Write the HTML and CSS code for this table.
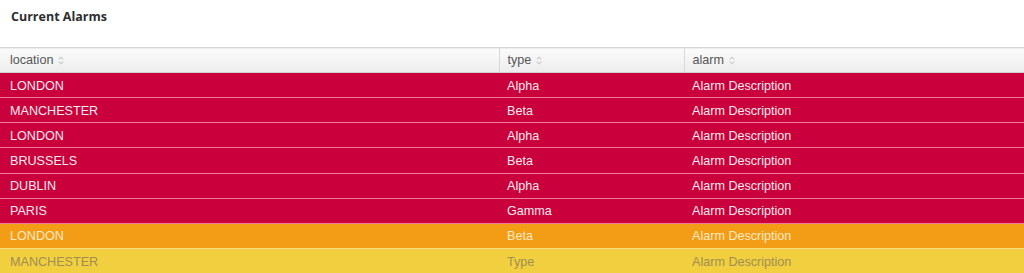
FILE: index.html
```html
<!DOCTYPE html>
<html>
<head>
<meta charset="utf-8">
<link rel="stylesheet" href="styles.css">
</head>
<body>
<div class="panel">
  <h2 class="title">Current Alarms</h2>
  <table class="alarms">
    <colgroup>
      <col class="c-loc">
      <col class="c-type">
      <col class="c-alarm">
    </colgroup>
    <thead>
      <tr>
        <th>location <span class="sort"><svg width="6" height="9" viewBox="0 0 6 9"><path d="M0.8 3.4 L3 1.2 L5.2 3.4 M0.8 5.6 L3 7.8 L5.2 5.6" fill="none" stroke="#c8c8c8" stroke-width="1.1"/></svg></span></th>
        <th class="div">type <span class="sort"><svg width="6" height="9" viewBox="0 0 6 9"><path d="M0.8 3.4 L3 1.2 L5.2 3.4 M0.8 5.6 L3 7.8 L5.2 5.6" fill="none" stroke="#c8c8c8" stroke-width="1.1"/></svg></span></th>
        <th class="div">alarm <span class="sort"><svg width="6" height="9" viewBox="0 0 6 9"><path d="M0.8 3.4 L3 1.2 L5.2 3.4 M0.8 5.6 L3 7.8 L5.2 5.6" fill="none" stroke="#c8c8c8" stroke-width="1.1"/></svg></span></th>
      </tr>
    </thead>
    <tbody>
      <tr class="crit"><td>LONDON</td><td>Alpha</td><td>Alarm Description</td></tr>
      <tr class="crit"><td>MANCHESTER</td><td>Beta</td><td>Alarm Description</td></tr>
      <tr class="crit"><td>LONDON</td><td>Alpha</td><td>Alarm Description</td></tr>
      <tr class="crit"><td>BRUSSELS</td><td>Beta</td><td>Alarm Description</td></tr>
      <tr class="crit"><td>DUBLIN</td><td>Alpha</td><td>Alarm Description</td></tr>
      <tr class="crit"><td>PARIS</td><td>Gamma</td><td>Alarm Description</td></tr>
      <tr class="major"><td>LONDON</td><td>Beta</td><td>Alarm Description</td></tr>
      <tr class="minor"><td>MANCHESTER</td><td>Type</td><td>Alarm Description</td></tr>
    </tbody>
  </table>
</div>
</body>
</html>
```

FILE: styles.css
```css
html, body {
  margin: 0;
  padding: 0;
  background: #ffffff;
}
body {
  font-family: "Liberation Sans", Arial, sans-serif;
  font-size: 12.6px;
}
.panel {
  width: 1024px;
}
.title {
  margin: 0;
  padding: 9px 11px 0 11px;
  height: 47px;
  box-sizing: border-box;
  font-family: "Open Sans", "Liberation Sans", sans-serif;
  font-size: 12.5px;
  font-weight: 700;
  color: #2e2e2e;
  line-height: 16px;
}
.alarms {
  width: 1024px;
  border-collapse: collapse;
  table-layout: fixed;
}
.c-loc { width: 499px; }
.c-type { width: 185px; }
.c-alarm { width: 340px; }
.alarms thead tr {
  background: linear-gradient(#fbfbfb, #ededed);
  border-top: 1px solid #d6d6d6;
  border-bottom: 1px solid #cfcfcf;
}
.alarms th {
  text-align: left;
  font-weight: 400;
  color: #555555;
  padding: 0 0 0 10px;
  height: 25px;
  box-sizing: border-box;
}
.alarms th.div {
  border-left: 1px solid #d8d8d8;
  padding-left: 8px;
}
.sort {
  display: inline-block;
  vertical-align: -1px;
  margin-left: 1px;
}
.sort svg { display: block; }
.alarms td {
  height: 25.15px;
  padding: 1px 0 0 8px;
  box-sizing: border-box;
  white-space: nowrap;
}
.alarms td:first-child { padding-left: 10px; }
.alarms tbody tr { border-bottom: 1px solid #f07c98; }
.crit { background: #c9003b; color: #fbe9ee; }
.major { background: #f39d17; color: #fde9c4; }
.alarms tr.major { border-bottom-color: #f7dc8a; }
.minor { background: #f2cf3f; color: #9e8e55; }
```
